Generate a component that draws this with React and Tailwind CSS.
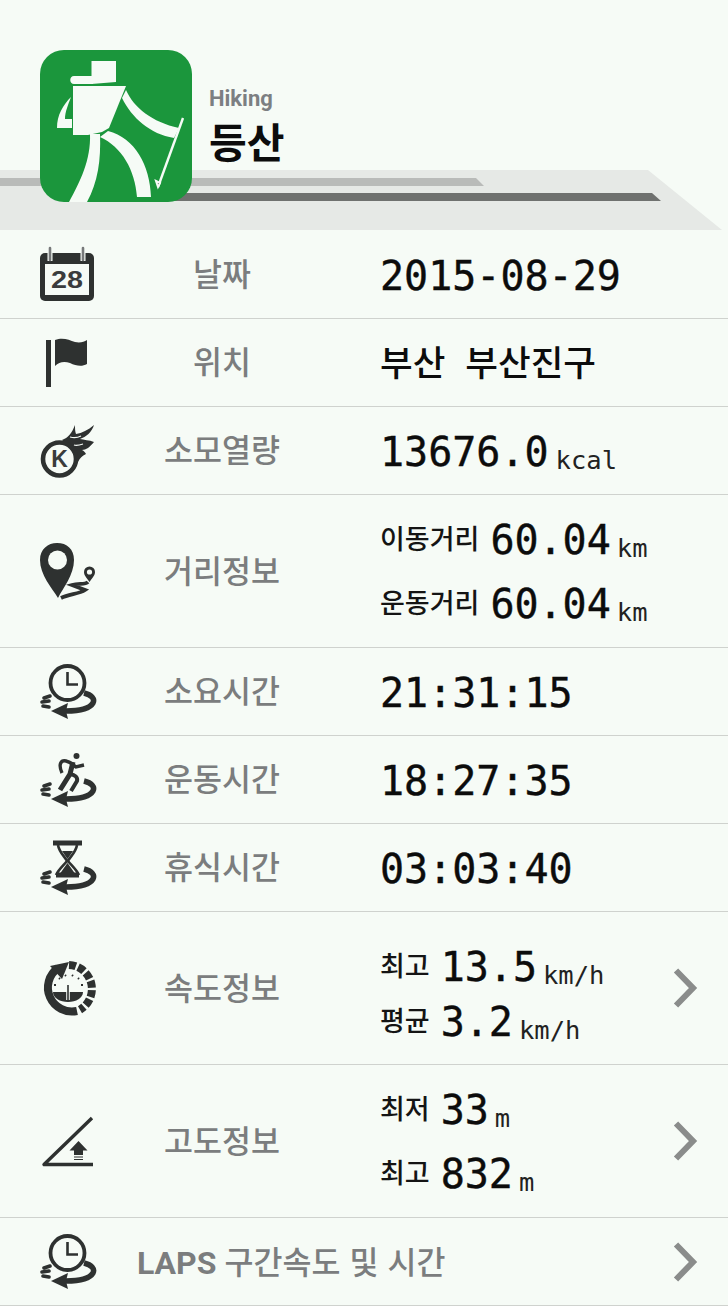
import React from 'react';

const MONO = "font-['DejaVu_Sans_Mono','Liberation_Mono',monospace]";

function Icon({ children }) {
  return (
    <svg width="64" height="64" viewBox="0 0 64 64" fill="none" className="shrink-0">
      {children}
    </svg>
  );
}

// the arrow circling under clock / runner / hourglass
function Orbit() {
  return (
    <g>
      <path d="M49 33 C57 35 60 39 58 43 C55 48 46 51 31 51" stroke="#2e3130" strokeWidth="5.5" />
      <path d="M16 51 L33 43 L31 51 L33 59 Z" fill="#2e3130" />
      <path d="M9 38 L15 36 M7 42 L14 41 M8 46 L14 47" stroke="#2e3130" strokeWidth="3.6" strokeLinecap="round" />
    </g>
  );
}

function ClockIcon() {
  return (
    <Icon>
      <Orbit />
      <circle cx="32.5" cy="23" r="17" stroke="#2e3130" strokeWidth="3.8" fill="#f6fbf6" />
      <path d="M32.5 12 V24.5 H43" stroke="#2e3130" strokeWidth="2.6" />
    </Icon>
  );
}

function CalendarIcon() {
  return (
    <Icon>
      <rect x="5" y="10" width="54" height="48" rx="5" fill="#2e3130" />
      <rect x="10" y="21" width="44" height="31" fill="#f6fbf6" />
      <path d="M15 5 V18 M48 5 V18" stroke="#f6fbf6" strokeWidth="5" />
      <path d="M15 5 V17 M48 5 V17" stroke="#77797a" strokeWidth="2.6" strokeLinecap="round" />
      <text x="16" y="45" fontSize="24" textLength="32" lengthAdjust="spacingAndGlyphs" fontWeight="700" fill="#3a3c3c" fontFamily="Liberation Sans, sans-serif">28</text>
    </Icon>
  );
}

function FlagIcon() {
  return (
    <Icon>
      <rect x="11" y="9" width="5" height="47" fill="#2e3130" />
      <path d="M20 9 C28 6 34 9 40 11 C45 12 49 11 52 9 V33 C47 36 41 35 35 32 C29 30 24 31 20 35 Z" fill="#2e3130" />
    </Icon>
  );
}

function FireIcon() {
  return (
    <Icon>
      <path d="M27 21 C33 19 37 14 40 6 C40 10 40 12 41 15 C47 14 53 11 59 6 C57 13 51 18 45 20 C49 21 54 21 59 23 C55 28 51 31 47 31 C49 32 50 33 51 35 C47 37 45 39 43 43 C42 34 35 27 27 21 Z" fill="#2e3130" />
      <path d="M35 18 C39 19 42 19 46 17 M39 26 C42 27 45 26 48 25" stroke="#f6fbf6" strokeWidth="1.2" />
      <circle cx="24.5" cy="40" r="16.5" stroke="#2e3130" strokeWidth="4.6" fill="#f6fbf6" />
      <text x="24.5" y="48" textAnchor="middle" fontSize="23" fontWeight="700" fill="#3a3c3c" fontFamily="Liberation Sans, sans-serif">K</text>
    </Icon>
  );
}

function PinIcon() {
  return (
    <Icon>
      <path d="M23 59 C17 49 5 36 5 21 C5 10 13 4 22 4 C32 4 39 10 39 21 C39 36 28 49 23 59 Z" fill="#2e3130" />
      <circle cx="22.5" cy="21" r="9.5" fill="#f6fbf6" />
      <path d="M54.5 43 C51 38 49 36 49 33 A5.5 5.5 0 0 1 60 33 C60 36 58 38 54.5 43 Z" fill="#2e3130" />
      <circle cx="54.5" cy="33" r="2.6" fill="#f6fbf6" />
      <path d="M53 43 C50 46 44 44 37 46 L50 51 C44 55 34 55 26 59" stroke="#2e3130" strokeWidth="3.8" />
    </Icon>
  );
}

function RunnerIcon() {
  return (
    <Icon>
      <Orbit />
      <circle cx="41.5" cy="8" r="3" fill="#2e3130" />
      <path d="M27 25 C23 16 26 12 31 13 C36 14 38 17 41 19 L49 17" stroke="#2e3130" strokeWidth="3.4" />
      <path d="M38 14 L35 26 L25 42" stroke="#2e3130" strokeWidth="5" />
      <path d="M35 26 C40 27 43 29 42 33 L36 43" stroke="#2e3130" strokeWidth="4" />
    </Icon>
  );
}

function HourglassIcon() {
  return (
    <Icon>
      <Orbit />
      <path d="M18 7 H47 M21 39 H44" stroke="#2e3130" strokeWidth="4.8" />
      <path d="M23 9 C24 16 30 21 32 25 C29 29 24 33 21 39 M42 9 C41 16 35 21 33 25 C36 29 41 33 44 39" stroke="#2e3130" strokeWidth="2.6" />
      <path d="M24 39 L32.5 27 L41 39 Z M27 15 H38 L32.5 23 Z" fill="#2e3130" />
    </Icon>
  );
}

function SpeedIcon() {
  return (
    <Icon>
      <path d="M23 12 A24 24 0 0 0 42 55" stroke="#2e3130" strokeWidth="8" />
      <path d="M34 6 L15 10 L27 23 Z" fill="#2e3130" />
      <path d="M34 9 A24 24 0 0 1 45 53.7" stroke="#2e3130" strokeWidth="8" strokeDasharray="7 2.4" />
      <path d="M18 36 H48 C48 42 41 46 33 46 C25 46 18 42 18 36 Z" fill="#2e3130" />
      <path d="M33 29 V44" stroke="#f6fbf6" strokeWidth="3.6" />
      <path d="M33 29 V44" stroke="#2e3130" strokeWidth="1.6" />
      <path d="M19 29 L21 29 M24 22 L25 23 M30 19 L31 20 M37 19 L38 20 M43 22 L44 23 M46 29 L48 29" stroke="#2e3130" strokeWidth="2" />
    </Icon>
  );
}

function SlopeIcon() {
  return (
    <Icon>
      <path d="M57 9 L9 55.5 H58" stroke="#2e3130" strokeWidth="3.4" strokeLinejoin="round" />
      <path d="M43.5 32 L52.5 41.5 H48 V46 H39 V41.5 H34.5 Z" fill="#2e3130" />
      <path d="M39 48 H48 M39 50.5 H48" stroke="#2e3130" strokeWidth="1.2" />
    </Icon>
  );
}

function Chevron() {
  return (
    <svg width="26" height="42" viewBox="0 0 26 42" fill="none" className="absolute left-[672px] top-1/2 -translate-y-1/2">
      <path d="M4 3.5 L21 21 L4 38.5" stroke="#8a8c8b" strokeWidth="6" />
    </svg>
  );
}

function Logo() {
  return (
    <svg width="152" height="152" viewBox="40 50 152 152" className="relative shrink-0">
      <rect x="40" y="50" width="152" height="152" rx="24" fill="#1b963c" />
      <g fill="#f6fbf6">
        <path d="M91.5 61 H116 V82 L91.5 84 Z" />
        <path d="M74 76 H93 V84 H74 C69 84 69 76 74 76 Z" />
        <path d="M73 86 H126 L109 128 L102 132 L88 135 H73 Z" />
        <path d="M71 97 C63 105 57 115 57 128 H72 V119 H65 C65 112 68 105 71 97 Z" />
        <path d="M126 90 C134 108 152 122 179 128 L174 138 C150 134 132 118 122 98 Z" />
        <path d="M90 134 H100 C101 160 98 182 87 202 H69 C80 182 91 160 90 134 Z" />
        <path d="M108 131 C135 138 150 165 151 197 H137 C135 170 122 147 100 137 Z" />
      </g>
      <path d="M183 118 L158 187" stroke="#f6fbf6" strokeWidth="2.4" />
      <path d="M156 181 L160 183 L158 187 Z" stroke="#f6fbf6" strokeWidth="2" />
    </svg>
  );
}

function Header() {
  return (
    <header className="relative h-[231px] shrink-0 pl-10 pt-[50px]">
      <svg width="728" height="61" viewBox="0 170 728 61" className="absolute bottom-0 left-0">
        <path d="M0 170 H648 L722 230 H0 Z" fill="#e6e9e6" />
        <path d="M0 178 H476 L484 186 H0 Z" fill="#b9bbb9" />
        <path d="M170 193 H652 L661 201 H170 Z" fill="#6f716f" />
      </svg>
      <div className="relative flex">
        <Logo />
        <div className="ml-[17px] flex flex-col">
          <span className="mt-[36px] font-['Roboto',sans-serif] text-[22px] leading-[26px] font-bold text-[#7c7f82]">Hiking</span>
          <span className="mt-[3px] font-['Noto_Sans_CJK_KR',sans-serif] text-[41px] leading-[50px] font-bold text-[#0c0c0c]">등산</span>
        </div>
      </div>
    </header>
  );
}

function Unit({ className, children }) {
  return (
    <span className={`${MONO} translate-y-[3px] text-[25.5px] text-[#222] ${className}`}>{children}</span>
  );
}

function Line({ label, value, unit, tall }) {
  return (
    <div className={`flex items-baseline ${tall ? 'h-[64px] leading-[64px]' : 'h-[55px] leading-[55px]'}`}>
      <span className="mr-[11px] -translate-y-[5px] text-[27px] font-medium text-[#141414]">{label}</span>
      <Big>{value}</Big>
      <Unit className="ml-[6px]">{unit}</Unit>
    </div>
  );
}

function Row({ icon, label, tall, chevron, children }) {
  return (
    <div className={`relative flex shrink-0 items-center border-b border-[#cfd2ce] ${tall ? 'h-[153px]' : 'h-[88px]'}`}>
      <div className="flex w-[134px] justify-center">{icon}</div>
      <div className="w-[176px] pb-[3px] text-center text-[31.5px] font-medium text-[#7b7d7e]">{label}</div>
      <div className="ml-[70px] pt-[2px]">{children}</div>
      {chevron && <Chevron />}
    </div>
  );
}

function Big({ children }) {
  return (
    <span className={`${MONO} text-[40px] text-[#0c0c0c] [-webkit-text-stroke:0.4px_#0c0c0c]`}>{children}</span>
  );
}

export default function App() {
  return (
    <div className="flex h-[1306px] w-[728px] flex-col overflow-hidden bg-[#f6fbf6] font-['Noto_Sans_CJK_KR','Noto_Sans',sans-serif]">
      <Header />
      <Row icon={<CalendarIcon />} label="날짜"><Big>2015-08-29</Big></Row>
      <Row icon={<FlagIcon />} label="위치">
        <div className="mb-[6px] flex gap-5 text-[35.5px] font-medium text-[#0c0c0c]">
          <span>부산</span>
          <span>부산진구</span>
        </div>
      </Row>
      <Row icon={<FireIcon />} label="소모열량">
        <div className="flex items-baseline">
          <Big>13676.0</Big>
          <Unit className="ml-[7px]">kcal</Unit>
        </div>
      </Row>
      <Row tall icon={<PinIcon />} label="거리정보">
        <Line tall label="이동거리" value="60.04" unit="km" />
        <Line tall label="운동거리" value="60.04" unit="km" />
      </Row>
      <Row icon={<ClockIcon />} label="소요시간"><Big>21:31:15</Big></Row>
      <Row icon={<RunnerIcon />} label="운동시간"><Big>18:27:35</Big></Row>
      <Row icon={<HourglassIcon />} label="휴식시간"><Big>03:03:40</Big></Row>
      <Row tall chevron icon={<SpeedIcon />} label="속도정보">
        <div className="pt-[12px]">
          <Line label="최고" value="13.5" unit="km/h" />
          <Line label="평균" value="3.2" unit="km/h" />
        </div>
      </Row>
      <Row tall chevron icon={<SlopeIcon />} label="고도정보">
        <Line tall label="최저" value="33" unit="m" />
        <Line tall label="최고" value="832" unit="m" />
      </Row>
      <div className="relative flex h-[88px] shrink-0 items-center border-b border-[#cfd2ce]">
        <div className="flex w-[134px] justify-center"><ClockIcon /></div>
        <div className="ml-[3px] flex items-baseline gap-[8px] text-[31.5px] font-medium text-[#7b7d7e]">
          <span className="font-['Roboto',sans-serif] text-[32px] font-bold">LAPS</span>
          <span className="[word-spacing:2px]">구간속도 및 시간</span>
        </div>
        <Chevron />
      </div>
    </div>
  );
}
